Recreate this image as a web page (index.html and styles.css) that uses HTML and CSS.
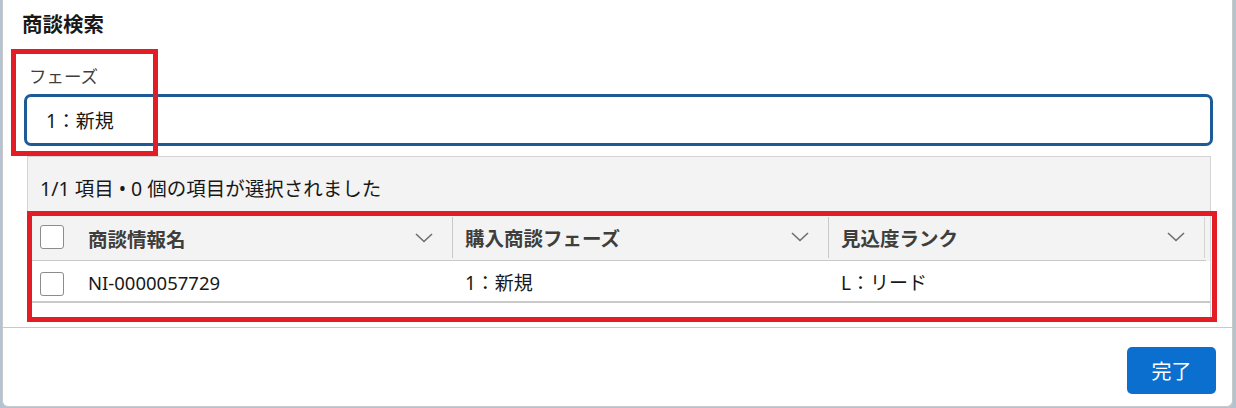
FILE: index.html
```html
<!DOCTYPE html>
<html lang="ja">
<head>
<meta charset="utf-8">
<link rel="stylesheet" href="styles.css">
</head>
<body>
<div class="modal">
  <div class="title">商談検索</div>
  <div class="content">
    <div class="label">フェーズ</div>
    <div class="input">1：新規</div>
    <div class="panel">
      <div class="status">1/1 項目 • 0 個の項目が選択されました</div>
      <div class="table">
        <div class="row head">
          <div class="cell check"><span class="box"></span></div>
          <div class="cell col">
            <span class="htext">商談情報名</span>
            <svg class="chev" width="18" height="10" viewBox="0 0 18 10"><path d="M1 1 L9 8.5 L17 1" fill="none" stroke="#706e6b" stroke-width="1.6"/></svg>
          </div>
          <div class="cell col sep">
            <span class="htext">購入商談フェーズ</span>
            <svg class="chev" width="18" height="10" viewBox="0 0 18 10"><path d="M1 1 L9 8.5 L17 1" fill="none" stroke="#706e6b" stroke-width="1.6"/></svg>
          </div>
          <div class="cell col sep last">
            <span class="htext">見込度ランク</span>
            <svg class="chev" width="18" height="10" viewBox="0 0 18 10"><path d="M1 1 L9 8.5 L17 1" fill="none" stroke="#706e6b" stroke-width="1.6"/></svg>
          </div>
        </div>
        <div class="row data">
          <div class="cell check"><span class="box"></span></div>
          <div class="cell col latin">NI-0000057729</div>
          <div class="cell col">1：新規</div>
          <div class="cell col">L：リード</div>
        </div>
      </div>
      <div class="spacer"></div>
    </div>
  </div>
  <div class="footer">
    <button class="done">完了</button>
  </div>
  <div class="mark mark1"></div>
  <div class="mark mark2"></div>
</div>
</body>
</html>
```

FILE: styles.css
```css
html, body {
  margin: 0;
  padding: 0;
}
body {
  width: 1236px;
  height: 408px;
  background: #b4c3d4;
  overflow: hidden;
  font-family: "Noto Sans", "Noto Sans CJK JP", sans-serif;
  color: #181818;
}
.modal {
  position: relative;
  margin-left: 2px;
  width: 1231px;
  height: 407px;
  box-sizing: border-box;
  background: #fff;
  border: 1px solid #c9c9c9;
  border-top: none;
  border-radius: 0 0 6px 6px;
  display: flex;
  flex-direction: column;
}
.title {
  padding: 11px 0 0 19px;
  font-size: 20.5px;
  line-height: 27px;
  font-weight: 700;
  color: #181818;
}
.content {
  padding: 0 19px 0 21px;
}
.label {
  margin-top: 27px;
  padding-left: 5px;
  font-size: 17.5px;
  line-height: 22px;
  color: #3e3e3c;
}
.input {
  margin-top: 7px;
  height: 52px;
  box-sizing: border-box;
  border: 3px solid #1d5a98;
  border-radius: 7px;
  padding-left: 19px;
  display: flex;
  align-items: center;
  font-size: 19px;
  color: #181818;
}
.panel {
  margin: 10px 2px 0 3px;
  border: 1px solid #d4d4d4;
  border-bottom: none;
  background: #f3f3f3;
}
.status {
  height: 60px;
  box-sizing: border-box;
  padding: 19px 0 0 12px;
  font-size: 19.5px;
  line-height: 26px;
  color: #181818;
}
.row {
  display: flex;
}
.head {
  height: 44px;
  background: #f3f3f3;
  border-bottom: 1px solid #c9c9c9;
  box-sizing: border-box;
  margin-right: 4px;
}
.data {
  height: 42px;
  padding-top: 2px;
  background: #fff;
  border-bottom: 2px solid #c9c9c9;
  box-sizing: border-box;
  font-size: 19px;
}
.latin {
  font-size: 18.5px;
}
.cell {
  display: flex;
  align-items: center;
  box-sizing: border-box;
}
.check {
  width: 48px;
  padding-left: 12px;
}
.box {
  width: 24px;
  height: 24px;
  box-sizing: border-box;
  border: 1px solid #8c8c8c;
  border-radius: 3px;
  background: #fff;
}
.head .check .box {
  margin-top: -4px;
}
.data .check .box {
  margin-top: 3px;
}
.col {
  width: 376px;
  padding-left: 12px;
}
.head .col {
  justify-content: space-between;
  padding-right: 19px;
}
.sep {
  border-left: 1px solid #c9c9c9;
  padding-left: 12px;
  margin-bottom: 3px;
}
.last {
  width: 377px;
  border-right: 1px solid #d4d4d4;
}
.head .sep {
  height: 41px;
  align-self: flex-start;
}
.data .col:nth-child(3) {
  padding-left: 13px;
}
.data .col:nth-child(4) {
  padding-left: 13px;
}
.htext {
  font-size: 19.5px;
  font-weight: 700;
  color: #3e3e3c;
}
.chev {
  display: block;
  margin-top: -2px;
}
.spacer {
  height: 16px;
  background: #fff;
}
.footer {
  margin-top: 8px;
  border-top: 1px solid #c9c9c9;
  flex: 1;
  display: flex;
  justify-content: flex-end;
  align-items: flex-start;
  padding: 19px 16px 0 0;
}
.done {
  width: 89px;
  height: 47px;
  border: none;
  border-radius: 5px;
  background: #0b6fd0;
  color: #fff;
  font-family: "Noto Sans", "Noto Sans CJK JP", sans-serif;
  font-size: 20px;
  padding: 0;
}
.mark {
  position: absolute;
  border: 5px solid #e31d25;
  box-sizing: border-box;
  pointer-events: none;
}
.mark1 {
  left: 8px;
  top: 49px;
  width: 147px;
  height: 107px;
}
.mark2 {
  left: 24px;
  top: 211px;
  width: 1190px;
  height: 111px;
}
```
